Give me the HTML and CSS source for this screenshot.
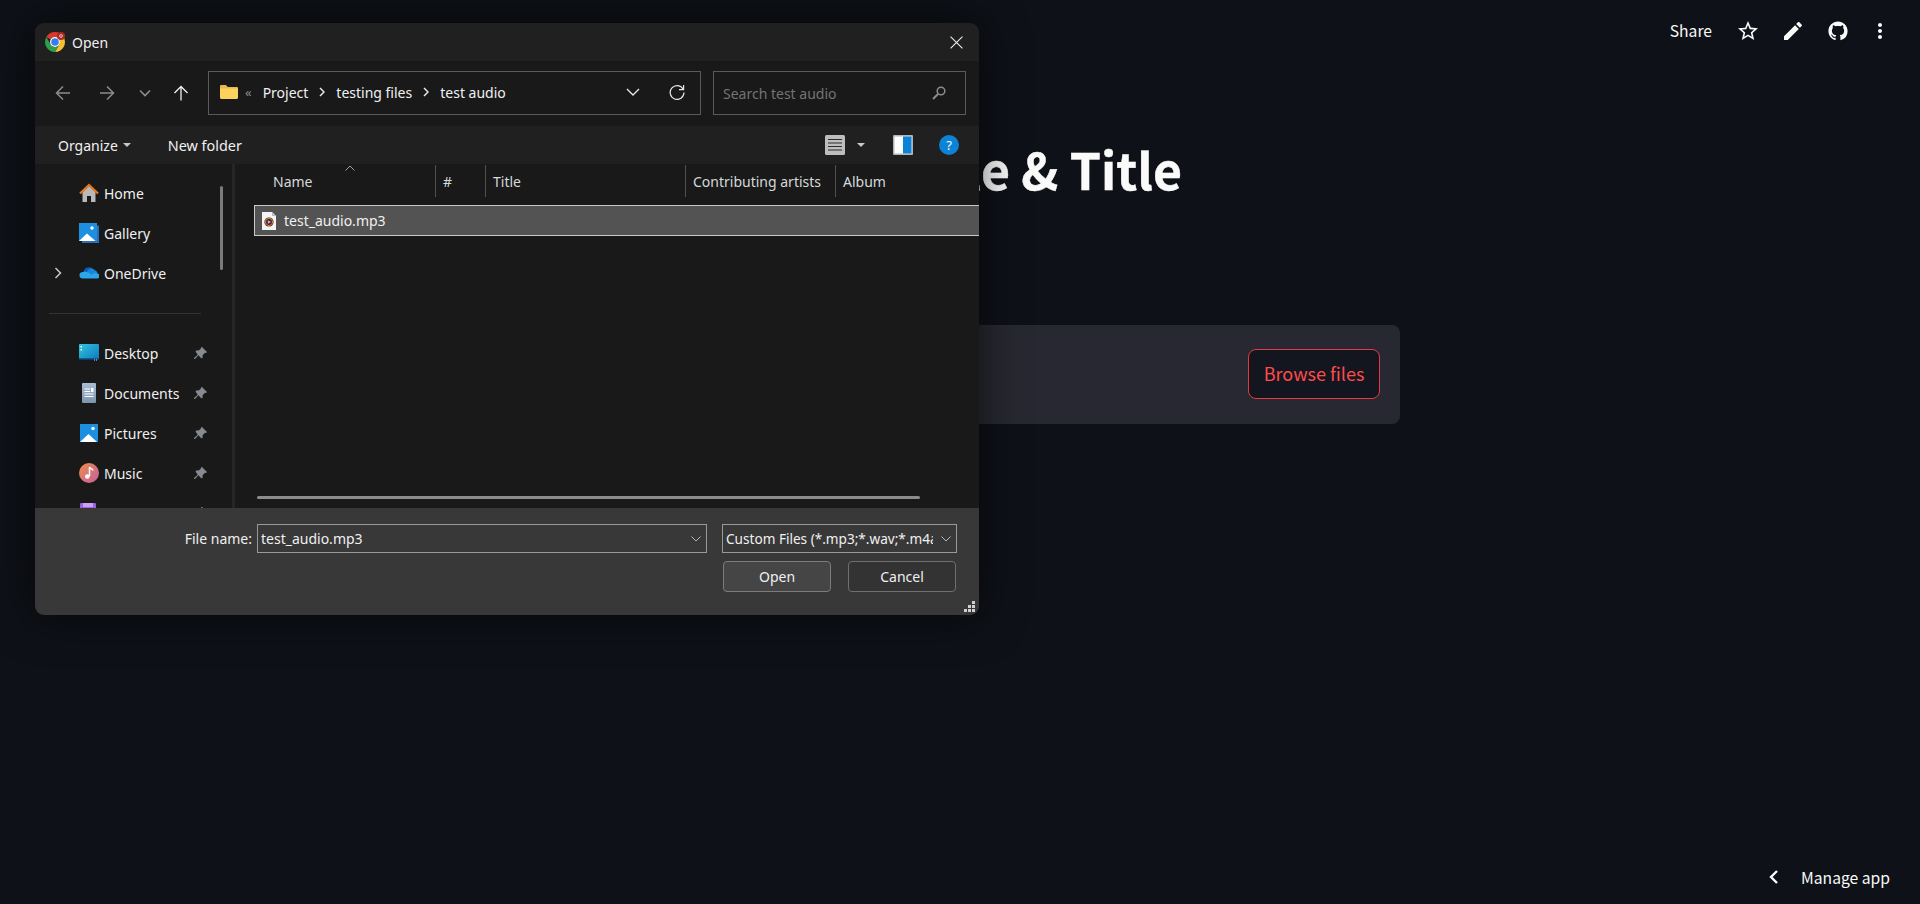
FILE: index.html
```html
<!DOCTYPE html>
<html>
  <head>
    <title>Open</title>
    <meta charset="UTF-8">
    <link rel="stylesheet" href="styles.css">
  </head>
  <body>
    <header class="topbar">
      <span class="share">Share</span>
      <svg class="tb-icon" viewBox="0 0 24 24"><path d="M22 9.24l-7.19-.62L12 2 9.19 8.63 2 9.24l5.46 4.73L5.82 21 12 17.27 18.18 21l-1.63-7.03L22 9.24zM12 15.4l-3.76 2.27 1-4.28-3.32-2.88 4.38-.38L12 6.1l1.71 4.04 4.38.38-3.32 2.88 1 4.28L12 15.4z"/></svg>
      <svg class="tb-icon" viewBox="0 0 24 24"><path d="M3 17.25V21h3.75L17.81 9.94l-3.75-3.75L3 17.25zM20.71 7.04c.39-.39.39-1.02 0-1.41l-2.34-2.34c-.39-.39-1.02-.39-1.41 0l-1.83 1.83 3.75 3.75 1.83-1.83z"/></svg>
      <svg class="tb-icon" viewBox="-2 -2 20 20"><path d="M8 0C3.58 0 0 3.58 0 8c0 3.54 2.29 6.53 5.47 7.59.4.07.55-.17.55-.38 0-.19-.01-.82-.01-1.49-2.01.37-2.53-.49-2.69-.94-.09-.23-.48-.94-.82-1.13-.28-.15-.68-.52-.01-.53.63-.01 1.08.58 1.23.82.72 1.21 1.87.87 2.33.66.07-.52.28-.87.51-1.07-1.78-.2-3.64-.89-3.64-3.95 0-.87.31-1.59.82-2.15-.08-.2-.36-1.02.08-2.12 0 0 .67-.21 2.2.82.64-.18 1.32-.27 2-.27.68 0 1.36.09 2 .27 1.53-1.04 2.2-.82 2.2-.82.44 1.1.16 1.92.08 2.12.51.56.82 1.27.82 2.15 0 3.07-1.87 3.75-3.65 3.95.29.25.54.73.54 1.48 0 1.07-.01 1.93-.01 2.2 0 .21.15.46.55.38A8.013 8.013 0 0016 8c0-4.42-3.58-8-8-8z"/></svg>
      <svg class="tb-icon dots" viewBox="3 0 18 24"><path d="M12 8c1.1 0 2-.9 2-2s-.9-2-2-2-2 .9-2 2 .9 2 2 2zm0 2c-1.1 0-2 .9-2 2s.9 2 2 2 2-.9 2-2-.9-2-2-2zm0 6c-1.1 0-2 .9-2 2s.9 2 2 2 2-.9 2-2-.9-2-2-2z"/></svg>
    </header>

    <main class="main">
      <h1 class="title">File &amp; Title</h1>
      <section class="uploader">
        <button class="browse">Browse files</button>
      </section>
    </main>

    <footer class="manage">
      <svg class="manage-chev" viewBox="0 0 12 16"><path d="M9 2L3 8l6 6" fill="none" stroke="#fafafa" stroke-width="2.4"/></svg>
      <span>Manage app</span>
    </footer>

    <!-- file picker window -->
    <div class="dialog">
      <div class="d-title">
        <svg class="chrome" viewBox="2 2 20 20">
          <path fill="#d8382d" d="M12 2A10 10 0 0 1 20.66 7H12A5 5 0 0 0 7.67 9.5L3.34 7A10 10 0 0 1 12 2z"/>
          <path fill="#f5c02d" d="M20.66 7A10 10 0 0 1 12 22L16.33 14.5A5 5 0 0 0 12 7z"/>
          <path fill="#2f9e4c" d="M3.34 7L7.67 14.5A5 5 0 0 0 16.33 14.5L12 22A10 10 0 0 1 3.34 7z"/>
          <circle cx="12" cy="12" r="5" fill="#fff"/>
          <circle cx="12" cy="12" r="3.8" fill="#3b7de8"/>
          <circle cx="18" cy="6" r="4" fill="#a82a22"/>
          <circle cx="18" cy="6" r="1.4" fill="none" stroke="#f1c9c5" stroke-width="0.9"/>
        </svg>
        <span class="d-title-text">Open</span>
        <svg class="d-close" viewBox="0 0 12 12"><path d="M.5.5l11 11M11.5.5l-11 11" stroke="#f0f0f0" stroke-width="1"/></svg>
      </div>

      <div class="d-address">
        <svg class="nav back" viewBox="0 0 16 16"><path d="M15 8H1.5M8 1.5L1.5 8 8 14.5" fill="none" stroke="#8c8c8c" stroke-width="1.5"/></svg>
        <svg class="nav forward" viewBox="0 0 16 16"><path d="M1 8h13.5M8 1.5L14.5 8 8 14.5" fill="none" stroke="#8c8c8c" stroke-width="1.5"/></svg>
        <svg class="nav-small" viewBox="0 0 12 12"><path d="M1 3.5l5 5 5-5" fill="none" stroke="#8c8c8c" stroke-width="1.6"/></svg>
        <svg class="nav up" viewBox="0 0 16 16"><path d="M8 15.5V1.5M1.5 8L8 1.5 14.5 8" fill="none" stroke="#f0f0f0" stroke-width="1.3"/></svg>
        <div class="addr-box">
          <svg class="addr-folder" viewBox="0 0 18 14"><path fill="#e9b94a" d="M0 1.2C0 .5.5 0 1.2 0h4.6l2 2h9c.7 0 1.2.5 1.2 1.2V4H0z"/><path fill="#fbd25e" d="M0 3.5h18v9.3c0 .7-.5 1.2-1.2 1.2H1.2C.5 14 0 13.5 0 12.8z"/></svg>
          <span class="addr-more">«</span>
          <span class="crumb">Project</span>
          <svg class="crumb-sep" viewBox="0 0 6 10"><path d="M1 1l4 4-4 4" fill="none" stroke="#e6e6e6" stroke-width="1.5"/></svg>
          <span class="crumb">testing files</span>
          <svg class="crumb-sep" viewBox="0 0 6 10"><path d="M1 1l4 4-4 4" fill="none" stroke="#e6e6e6" stroke-width="1.5"/></svg>
          <span class="crumb">test audio</span>
          <svg class="addr-drop" viewBox="0 0 14 8"><path d="M1 1l6 6 6-6" fill="none" stroke="#e6e6e6" stroke-width="1.4"/></svg>
          <svg class="addr-refresh" viewBox="0 0 16 16"><path d="M14.2 5.3A6.9 6.9 0 1 0 15 8.6" fill="none" stroke="#e6e6e6" stroke-width="1.2"/><path d="M14.6 1v4.6H10" fill="none" stroke="#e6e6e6" stroke-width="1.2"/></svg>
        </div>
        <div class="search-box">
          <span class="search-text">Search test audio</span>
          <svg class="search-icon" viewBox="0 0 14 14"><circle cx="9" cy="5" r="3.8" fill="none" stroke="#8c8c8c" stroke-width="1.5"/><path d="M6 8L1 13" stroke="#8c8c8c" stroke-width="2"/></svg>
        </div>
      </div>

      <div class="d-toolbar">
        <span class="tool">Organize</span>
        <span class="caret organize-caret"></span>
        <span class="tool new-folder">New folder</span>
        <span class="tool-space"></span>
        <svg class="view-icon" viewBox="0 0 20 20"><rect width="20" height="20" rx="1.5" fill="#bdbdbd"/><path d="M3 4.5h14M3 8h14M3 11.5h14M3 15h14" stroke="#2b2b2b" stroke-width="1.2"/></svg>
        <span class="caret view-caret"></span>
        <svg class="preview-icon" viewBox="0 0 20 20"><rect width="20" height="20" rx="1" fill="#b4b4b4"/><rect x="1.5" y="1.5" width="17" height="17" fill="#fff"/><rect x="10" y="1.5" width="8.5" height="17" fill="#0d83d8"/></svg>
        <span class="help">?</span>
      </div>

      <div class="d-panes">
        <nav class="tree">
          <div class="tree-item">
            <svg class="t-icon" viewBox="0 0 20 20"><path fill="#b9b9b9" d="M3.5 9L10 3l6.5 6v10H12v-6H8v6H3.5z"/><path d="M1 10.5L10 2l9 8.5" fill="none" stroke="#e8771d" stroke-width="2.3"/></svg>
            <span>Home</span>
          </div>
          <div class="tree-item">
            <svg class="t-icon" viewBox="0 0 20 20"><path fill="#2a6eb8" d="M18 2.5h2V20H3v-2h15z"/><rect width="18" height="18" fill="#1d8fe0"/><path fill="#fff" d="M0 18l8-7.5L16.5 18z"/><circle cx="13" cy="5" r="1.7" fill="#fff"/></svg>
            <span>Gallery</span>
          </div>
          <div class="tree-item">
            <svg class="chev" viewBox="0 0 8 12"><path d="M1.5 1l5 5-5 5" fill="none" stroke="#c8c8c8" stroke-width="1.5"/></svg>
            <svg class="t-icon" viewBox="0 0 20 20"><path fill="#0b5fb5" d="M4.5 9a5.5 5.5 0 0 1 10-2.200L9 12z"/><path fill="#1a86d9" d="M8 8.5a4.5 4.5 0 0 1 7.5-1.500 4 4 0 0 1 3 3L12 14z"/><path fill="#2aa6ea" d="M4 9a3.300 3.300 0 0 0-1 6.500h14.500a2.500 2.500 0 0 0 1-5c-2-1-4 0-6 1.500-3-3-5-3.500-8.500-3z"/></svg>
            <span>OneDrive</span>
          </div>
          <div class="tree-gap"><hr class="tree-rule"></div>
          <div class="tree-item">
            <svg class="t-icon" viewBox="0 0 20 20"><defs><linearGradient id="desk" x1="0" y1="0" x2="1" y2="1"><stop offset="0" stop-color="#2cc8e0"/><stop offset="1" stop-color="#1477bd"/></linearGradient></defs><rect y="1" width="20" height="15" rx="1" fill="url(#desk)"/><rect y="15" width="20" height="1.5" fill="#0c5d99"/><rect x="1.5" y="3" width="1.5" height="1.5" fill="#fff"/><rect x="1.5" y="6" width="1.5" height="1.5" fill="#fff"/><rect x="15" y="16.500" width="1" height="1" fill="#ddd"/><rect x="17" y="16.500" width="1" height="1" fill="#ddd"/></svg>
            <span class="t-label">Desktop</span>
            <svg class="pin" viewBox="0 0 13 13"><path fill="#858b90" d="M8 0l5 5-1 1-1-.3-2.500 2.500.3 2-1.300 1.300L4.300 8.300 1 12l-1-.2 0-.8 3.700-3.300L1.500 4.500 2.800 3.200l2 .3L7.300 1 7 0z"/></svg>
          </div>
          <div class="tree-item">
            <svg class="t-icon" viewBox="0 0 20 20"><defs><linearGradient id="docs" x1="0" y1="0" x2="0" y2="1"><stop offset="0" stop-color="#a9bdd3"/><stop offset="1" stop-color="#7d94ad"/></linearGradient></defs><rect x="3" y="0" width="14" height="20" rx="1" fill="url(#docs)"/><path d="M5.500 6h5.500M5.500 8.500h5.500M5.500 11h9M5.500 13.500h9" stroke="#fff" stroke-width="1"/><rect x="12" y="5" width="2.500" height="4" fill="#fff"/></svg>
            <span class="t-label">Documents</span>
            <svg class="pin" viewBox="0 0 13 13"><path fill="#858b90" d="M8 0l5 5-1 1-1-.3-2.500 2.500.3 2-1.300 1.300L4.300 8.300 1 12l-1-.2 0-.8 3.700-3.300L1.500 4.500 2.800 3.200l2 .3L7.300 1 7 0z"/></svg>
          </div>
          <div class="tree-item">
            <svg class="t-icon" viewBox="0 0 20 20"><rect x="1" y="1" width="18" height="18" fill="#1d8fe0"/><path fill="#fff" d="M1 19l8.500-8L18 19z"/><circle cx="14" cy="5.500" r="1.700" fill="#fff"/></svg>
            <span class="t-label">Pictures</span>
            <svg class="pin" viewBox="0 0 13 13"><path fill="#858b90" d="M8 0l5 5-1 1-1-.3-2.500 2.500.3 2-1.300 1.300L4.300 8.300 1 12l-1-.2 0-.8 3.700-3.300L1.500 4.500 2.800 3.200l2 .3L7.300 1 7 0z"/></svg>
          </div>
          <div class="tree-item">
            <svg class="t-icon" viewBox="0 0 20 20"><defs><linearGradient id="mus" x1="0" y1="0" x2="1" y2="1"><stop offset="0" stop-color="#f08b4a"/><stop offset="1" stop-color="#c4609e"/></linearGradient></defs><circle cx="10" cy="10" r="10" fill="url(#mus)"/><path d="M10.500 4v9" stroke="#fff" stroke-width="1.500"/><path d="M10.500 4c1 2 3 2 3.500 3.500" fill="none" stroke="#fff" stroke-width="1.500"/><circle cx="8.300" cy="13.500" r="2.300" fill="#fff"/></svg>
            <span class="t-label">Music</span>
            <svg class="pin" viewBox="0 0 13 13"><path fill="#858b90" d="M8 0l5 5-1 1-1-.3-2.500 2.500.3 2-1.300 1.300L4.300 8.300 1 12l-1-.2 0-.8 3.700-3.300L1.500 4.500 2.800 3.200l2 .3L7.300 1 7 0z"/></svg>
          </div>
          <div class="tree-item">
            <svg class="t-icon" viewBox="0 0 20 20"><rect x="1" y="0" width="16" height="20" rx="1" fill="#9a62e0"/><rect x="4" y="0" width="10" height="4" fill="#c9a2f2"/></svg>
            <span class="t-label"></span>
            <svg class="pin" viewBox="0 0 13 13"><path fill="#858b90" d="M8 0l5 5-1 1-1-.3-2.500 2.500.3 2-1.300 1.300L4.300 8.300 1 12l-1-.2 0-.8 3.700-3.300L1.500 4.500 2.800 3.200l2 .3L7.300 1 7 0z"/></svg>
          </div>
          <div class="tree-scroll"></div>
        </nav>

        <div class="list">
          <div class="cols">
            <div class="col col-name">Name</div>
            <div class="col col-num">#</div>
            <div class="col col-title">Title</div>
            <div class="col col-artists">Contributing artists</div>
            <div class="col col-album">Album</div>
            <svg class="sort" viewBox="0 0 10 6"><path d="M.5 5.5L5 1l4.500 4.500" fill="none" stroke="#a0a0a0" stroke-width="1"/></svg>
          </div>
          <div class="row-selected">
            <svg class="file-icon" viewBox="0 0 14 18"><path fill="#f4f4f4" d="M0 0h10l4 4v14H0z"/><path fill="#bdbdbd" d="M10 0l4 4h-4z"/><circle cx="7" cy="10" r="4.600" fill="#3a2a32"/><circle cx="7" cy="10" r="3.600" fill="none" stroke="#e8812d" stroke-width="1"/><path fill="#e9a0dc" d="M5.800 8.200v3.600L9 10z"/></svg>
            <span>test_audio.mp3</span>
          </div>
          <div class="hscroll"></div>
        </div>
      </div>

      <div class="d-bottom">
        <div class="b-row">
          <label class="b-label">File name:</label>
          <div class="b-input">
            <span class="b-value">test_audio.mp3</span>
            <svg class="b-chev" viewBox="0 0 10 6"><path d="M.5.5L5 5 9.500.5" fill="none" stroke="#b8b8b8" stroke-width="1"/></svg>
          </div>
          <div class="b-filter">
            <span class="b-value">Custom Files (*.mp3;*.wav;*.m4a</span>
            <svg class="b-chev" viewBox="0 0 10 6"><path d="M.5.5L5 5 9.500.5" fill="none" stroke="#b8b8b8" stroke-width="1"/></svg>
          </div>
        </div>
        <div class="b-actions">
          <button class="d-btn d-btn-main">Open</button>
          <button class="d-btn">Cancel</button>
        </div>
        <svg class="grip" viewBox="0 0 11 11"><path fill="#cfcfcf" d="M8 0h3v3H8zM4 4h3v3H4zM8 4h3v3H8zM0 8h3v3H0zM4 8h3v3H4zM8 8h3v3H8z"/></svg>
      </div>
    </div>
  </body>
</html>
```

FILE: styles.css
```css
html, body {
  height: 100%;
  width: 100%;
}
body {
  margin: 0;
  position: relative;
  overflow: hidden;
  display: flex;
  flex-direction: column;
  background: #0e1117;
  color: #fafafa;
  font-family: "Noto Sans CJK SC", "Source Sans Pro", sans-serif;
  font-size: 16px;
}

/* page behind the dialog */
.topbar {
  display: flex;
  align-items: center;
  justify-content: flex-end;
  gap: 21px;
  height: 62px;
  padding-right: 31px;
  flex: none;
}
.share {
  margin: -2px 3px 0 0;
  font-size: 15.7px;
}
.tb-icon {
  width: 24px;
  height: 24px;
  fill: #fafafa;
}
.dots {
  width: 18px;
}
.main {
  width: 880px;
  margin: 0 auto;
  flex: 1;
}
.title {
  margin: 72px 218px 0 0;
  font-size: 50px;
  line-height: 68px;
  font-weight: 700;
  -webkit-text-stroke: 0.4px #fafafa;
  text-align: right;
  white-space: nowrap;
}
.uploader {
  display: flex;
  align-items: flex-start;
  justify-content: flex-end;
  box-sizing: border-box;
  height: 99px;
  margin-top: 123px;
  padding: 24px 20px 0 0;
  background: #282832;
  border-radius: 8px;
}
.browse {
  width: 132px;
  height: 50px;
  padding: 0 0 3px;
  background: #13161f;
  border: 1px solid #e5393f;
  border-radius: 8px;
  color: #ff4b4b;
  font-family: inherit;
  font-size: 18px;
}
.manage {
  display: flex;
  align-items: center;
  height: 54px;
  flex: none;
  padding-left: 1767px;
  font-size: 15.7px;
  white-space: nowrap;
}
.manage-chev {
  width: 14px;
  height: 16px;
  margin-right: 20px;
}

/* dialog */
.dialog {
  position: absolute;
  left: 35px;
  top: 23px;
  width: 944px;
  height: 592px;
  display: flex;
  flex-direction: column;
  overflow: hidden;
  border-radius: 9px;
  background: #191919;
  box-shadow: 0 0 46px rgba(0,0,0,0.62);
  color: #f0f0f0;
  font-family: "Noto Sans", "Open Sans", sans-serif;
  font-size: 14px;
}
.d-title {
  display: flex;
  align-items: center;
  height: 38px;
  flex: none;
  padding: 0 16px 0 10px;
  background: #202020;
}
.chrome {
  width: 20px;
  height: 20px;
}
.d-title-text {
  margin-left: 7px;
  flex: 1;
}
.d-close {
  width: 13px;
  height: 13px;
}
.d-address {
  display: flex;
  align-items: center;
  box-sizing: border-box;
  height: 65px;
  padding-bottom: 1px;
  flex: none;
  background: #191919;
}
.nav {
  width: 16px;
  height: 16px;
}
.back {
  margin-left: 20px;
}
.forward {
  margin-left: 28px;
}
.nav-small {
  width: 12px;
  height: 12px;
  margin-left: 24px;
}
.up {
  margin-left: 22px;
}
.addr-box {
  display: flex;
  align-items: center;
  box-sizing: border-box;
  width: 493px;
  height: 44px;
  margin-left: 19px;
  padding: 0 0 2px 11px;
  border: 1px solid #5a5a5a;
}
.addr-folder {
  width: 18px;
  height: 14px;
}
.addr-more {
  margin: 0 11px 0 7px;
  color: #8a8a8a;
  font-size: 13px;
}
.crumb-sep {
  width: 6px;
  height: 10px;
  margin: 0 11px;
}
.addr-drop {
  width: 14px;
  height: 8px;
  margin-left: auto;
}
.addr-refresh {
  width: 16px;
  height: 16px;
  margin: 0 15px 0 29px;
}
.search-box {
  display: flex;
  align-items: center;
  justify-content: space-between;
  box-sizing: border-box;
  width: 253px;
  height: 44px;
  margin-left: 12px;
  padding: 0 19px 0 9px;
  border: 1px solid #5a5a5a;
}
.search-text {
  color: #747474;
}
.search-icon {
  width: 14px;
  height: 14px;
}
.d-toolbar {
  display: flex;
  align-items: center;
  height: 38px;
  flex: none;
  padding-left: 23px;
  background: #202020;
}
.caret {
  width: 0;
  height: 0;
  border: 4px solid transparent;
  border-top: 4px solid #c8c8c8;
  border-bottom: 0;
}
.organize-caret {
  margin: 0 37px 0 5px;
}
.new-folder {
  font-size: 14.4px;
}
.tool-space {
  flex: 1;
}
.view-icon, .preview-icon {
  width: 20px;
  height: 20px;
}
.view-caret {
  margin: 0 28px 0 12px;
}
.help {
  width: 20px;
  height: 20px;
  margin: 0 20px 0 26px;
  border-radius: 50%;
  background: #0d83d8;
  color: #fff;
  font-size: 13px;
  line-height: 20px;
  text-align: center;
}
.d-panes {
  display: flex;
  flex: 1;
  min-height: 0;
  background: #191919;
}
.tree {
  position: relative;
  box-sizing: border-box;
  width: 200px;
  flex: none;
  overflow: hidden;
  padding-top: 9px;
  border-right: 3px solid #262626;
}
.tree-item {
  display: flex;
  align-items: center;
  height: 40px;
  padding-left: 44px;
  position: relative;
}
.t-icon {
  width: 20px;
  height: 20px;
  flex: none;
  margin-right: 5px;
}
.chev {
  position: absolute;
  left: 19px;
  width: 8px;
  height: 12px;
}
.t-label {
  flex: 1;
}
.pin {
  width: 13px;
  height: 13px;
  margin-right: 25px;
}
.tree-gap {
  display: flex;
  align-items: center;
  height: 40px;
  padding: 0 31px 0 14px;
}
.tree-rule {
  width: 100%;
  margin: 0;
  border: 0;
  border-top: 1px solid #333;
}
.tree-scroll {
  position: absolute;
  left: 185px;
  top: 22px;
  width: 3px;
  height: 84px;
  border-radius: 2px;
  background: #7b7b7b;
}
.list {
  position: relative;
  flex: 1;
  min-width: 0;
  padding-left: 19px;
}
.cols {
  display: flex;
  height: 33px;
  margin: 1px 0 7px -19px;
  color: #d5d9dc;
}
.col {
  box-sizing: border-box;
  height: 32px;
  padding: 2px 0 0 8px;
  line-height: 29px;
  white-space: nowrap;
  border-right: 1px solid #505050;
}
.col-name {
  width: 201px;
  padding-left: 38px;
}
.col-num {
  width: 50px;
  padding-left: 7px;
}
.col-title {
  width: 200px;
  padding-left: 7px;
}
.col-artists {
  width: 150px;
  padding-left: 7px;
}
.col-album {
  padding-left: 7px;
  border-right: 0;
}
.sort {
  position: absolute;
  left: 110px;
  top: 1px;
  width: 10px;
  height: 6px;
}
.row-selected {
  display: flex;
  align-items: center;
  box-sizing: border-box;
  height: 31px;
  padding-left: 7px;
  border: 1px solid #c9c9c9;
  border-right: 0;
  background: #535353;
}
.file-icon {
  width: 14px;
  height: 18px;
  margin-right: 8px;
}
.hscroll {
  position: absolute;
  left: 22px;
  right: 59px;
  bottom: 9px;
  height: 3px;
  border-radius: 2px;
  background: #8c8c8c;
}
.d-bottom {
  position: relative;
  flex: none;
  height: 107px;
  padding-top: 16px;
  box-sizing: border-box;
  background: #383838;
}
.b-row {
  display: flex;
  align-items: center;
  justify-content: flex-end;
  padding-right: 22px;
}
.b-label {
  margin-right: 5px;
}
.b-input, .b-filter {
  display: flex;
  align-items: center;
  box-sizing: border-box;
  height: 29px;
  border: 1px solid #999;
  padding-left: 3px;
}
.b-input {
  width: 450px;
}
.b-filter {
  width: 235px;
  margin-left: 15px;
  font-size: 13.6px;
}
.b-value {
  flex: 1;
  min-width: 0;
  overflow: hidden;
  white-space: nowrap;
}
.b-chev {
  width: 10px;
  height: 6px;
  margin: 0 5px 0 8px;
}
.b-actions {
  display: flex;
  justify-content: flex-end;
  gap: 17px;
  margin-top: 8px;
  padding-right: 23px;
}
.d-btn {
  width: 108px;
  height: 31px;
  border: 1px solid #6f6f6f;
  border-radius: 4px;
  background: #333;
  color: #f0f0f0;
  font: inherit;
}
.d-btn-main {
  background: #454545;
  border-color: #7c7c7c;
}
.grip {
  position: absolute;
  right: 4px;
  bottom: 3px;
  width: 11px;
  height: 11px;
}
```
